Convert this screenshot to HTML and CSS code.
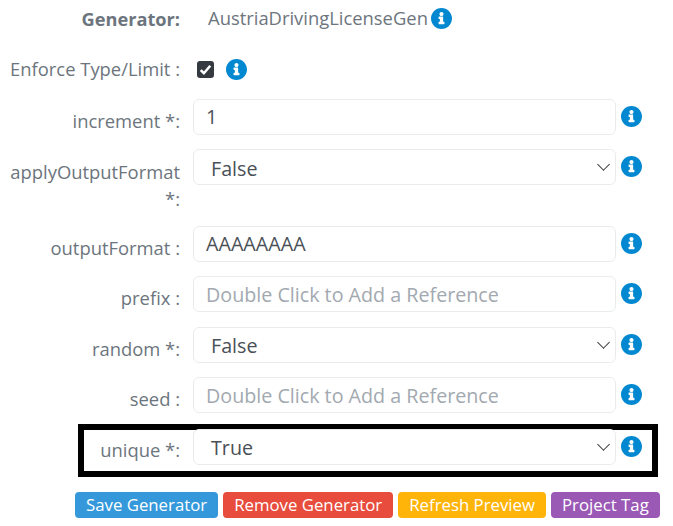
FILE: index.html
```html
<!DOCTYPE html>
<html lang="en">
<head>
  <meta charset="UTF-8" />
  <meta name="viewport" content="width=device-width, initial-scale=1.0" />
  <title>Generator</title>
  <link rel="stylesheet" href="styles.css">
</head>
<body>
  <svg class="icon-defs" width="0" height="0">
    <symbol id="info" viewBox="0 0 512 512">
      <path d="M256 0C115 0 0 115 0 256s115 256 256 256 256-115 256-256S397 0 256 0zm0 96c28 0 50 22 50 50s-22 50-50 50-50-22-50-50 22-50 50-50zm72 290c0 7-5 12-12 12H196c-7 0-12-5-12-12v-36c0-7 5-12 12-12h20v-68h-20c-7 0-12-5-12-12v-36c0-7 5-12 12-12h88c7 0 12 5 12 12v116h20c7 0 12 5 12 12v36z"/>
    </symbol>
  </svg>

  <form class="generator-form">
    <div class="form-row head-row">
      <label class="form-label strong">Generator:</label>
      <div class="generator-name">
        AustriaDrivingLicenseGen
        <svg class="info-icon"><use href="#info"/></svg>
      </div>
    </div>

    <div class="form-row check-row">
      <label class="form-label">Enforce Type/Limit :</label>
      <div class="check-wrap">
        <span class="check-box">
          <svg viewBox="0 0 16 16"><path d="M3.5 8.5l3 3 6-7" fill="none" stroke="#fff" stroke-width="2.4"/></svg>
        </span>
        <svg class="info-icon"><use href="#info"/></svg>
      </div>
    </div>

    <div class="form-row">
      <label class="form-label">increment *:</label>
      <input class="form-field" type="text" value="1" />
      <svg class="info-icon"><use href="#info"/></svg>
    </div>

    <div class="form-row tall-row">
      <label class="form-label">applyOutputFormat *:</label>
      <div class="form-field select-field">False</div>
      <svg class="info-icon"><use href="#info"/></svg>
    </div>

    <div class="form-row">
      <label class="form-label">outputFormat :</label>
      <input class="form-field" type="text" value="AAAAAAAA" />
      <svg class="info-icon"><use href="#info"/></svg>
    </div>

    <div class="form-row">
      <label class="form-label">prefix :</label>
      <input class="form-field" type="text" placeholder="Double Click to Add a Reference" />
      <svg class="info-icon"><use href="#info"/></svg>
    </div>

    <div class="form-row random-row">
      <label class="form-label">random *:</label>
      <div class="form-field select-field">False</div>
      <svg class="info-icon"><use href="#info"/></svg>
    </div>

    <div class="form-row">
      <label class="form-label">seed :</label>
      <input class="form-field" type="text" placeholder="Double Click to Add a Reference" />
      <svg class="info-icon"><use href="#info"/></svg>
    </div>

    <div class="form-row last-row">
      <div class="highlight"></div>
      <label class="form-label">unique *:</label>
      <div class="form-field select-field">True</div>
      <svg class="info-icon"><use href="#info"/></svg>
    </div>

    <div class="actions">
      <button class="btn btn-blue" type="button">Save Generator</button>
      <button class="btn btn-red" type="button">Remove Generator</button>
      <button class="btn btn-yellow" type="button">Refresh Preview</button>
      <button class="btn btn-purple" type="button">Project Tag</button>
    </div>
  </form>
</body>
</html>
```

FILE: styles.css
```css
* { box-sizing: border-box; }
body {
  font-family: "Open Sans", sans-serif;
  margin: 0;
  background: white;
  color: #5e6973;
  overflow: hidden;
}
.icon-defs { position: absolute; }
.generator-form {
  padding: 0 0 0 10px;
  width: 673px;
}
.form-row {
  display: grid;
  grid-template-columns: 183px 423px 30px;
  align-items: start;
  height: 50.5px;
}
.head-row { height: 48px; padding-top: 6px; }
.check-row { height: 50.5px; padding-top: 9px; }
.tall-row { height: 76.5px; }
.last-row { position: relative; height: 63.5px; margin-top: 1px; }
.form-label {
  font-size: 18.4px;
  line-height: 27px;
  text-align: right;
  padding: 8px 13px 0 0;
  color: #6c757d;
}
.tall-row .form-label { padding-top: 9px; }
.last-row .form-label { padding-top: 7px; }
.head-row .form-label { padding-top: 0; }
.check-row .form-label { padding-top: 0; margin-top: -2px; }
.strong { font-weight: 700; font-size: 18.2px; }
.generator-name {
  display: flex;
  align-items: center;
  gap: 3px;
  font-size: 18.4px;
  line-height: 24px;
  padding-left: 15px;
  color: #6c757d;
  grid-column: 2 / 4;
}
.check-wrap {
  display: flex;
  align-items: center;
  gap: 12px;
  height: 25px;
  padding-left: 4px;
}
.check-box {
  display: block;
  width: 17px;
  height: 17px;
  border-radius: 3px;
  background: #343a40;
}
.check-box svg { display: block; width: 17px; height: 17px; }
.form-field {
  width: 423px;
  height: 36px;
  border: 1px solid #e9ecef;
  border-radius: 6px;
  background: white;
  font-family: inherit;
  font-size: 19.7px;
  color: #495057;
  padding: 0 12px;
  outline: none;
}
.form-field::placeholder { color: #a2a9b0; opacity: 1; }
.select-field {
  line-height: 38px;
  padding-left: 17px;
  position: relative;
}
.last-row .select-field { line-height: 36px; }
.random-row .select-field { line-height: 36px; }
.select-field::after {
  content: "";
  position: absolute;
  right: 7px;
  top: 10px;
  width: 8px;
  height: 8px;
  border-right: 1.8px solid #3a3a3a;
  border-bottom: 1.8px solid #3a3a3a;
  transform: rotate(45deg);
}
.info-icon {
  display: block;
  width: 21px;
  height: 21px;
  fill: #0288d1;
  flex: none;
}
.form-row > .info-icon { margin: 7px 0 0 5px; }
.highlight {
  position: absolute;
  left: 68px;
  top: -5px;
  width: 580px;
  height: 53px;
  border: 6px solid black;
  pointer-events: none;
}
.actions {
  display: flex;
  gap: 5px;
  padding-left: 65px;
}
.btn {
  font-family: inherit;
  font-size: 16.8px;
  line-height: 24px;
  height: 26px;
  padding: 0 11px;
  border: 0;
  border-radius: 4px;
  color: white;
  white-space: nowrap;
}
.btn-blue { background: #3498db; }
.btn-red { background: #e74c3c; }
.btn-yellow { background: #ffb40a; }
.btn-purple { background: #9b59b6; }
```
